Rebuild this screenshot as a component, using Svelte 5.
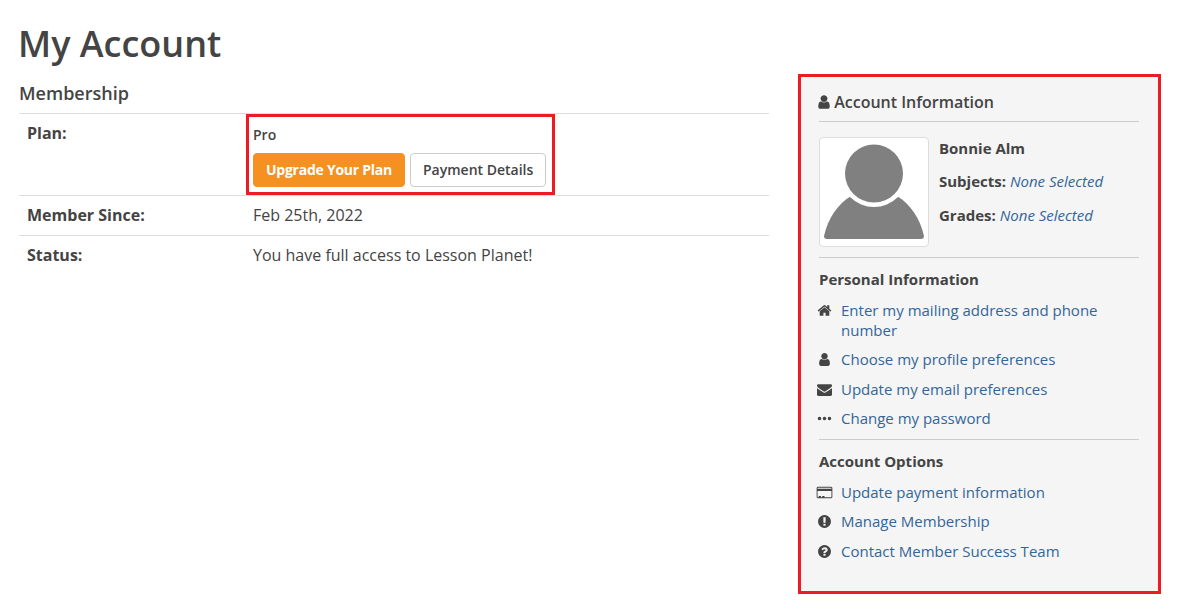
<script>
  // Font Awesome 4 style glyphs, 1792 box
  const ICONS = {
    user: 'M1536 1399q0 109-62.5 187t-150.5 78h-854q-88 0-150.5-78t-62.5-187q0-85 8.5-160.5t31.5-152 58.5-131 94-89 134.5-34.5q131 128 313 128t313-128q76 0 134.5 34.5t94 89 58.5 131 31.5 152 8.5 160.5zm-256-887q0 159-112.5 271.5t-271.5 112.5-271.5-112.5-112.5-271.5 112.5-271.5 271.5-112.5 271.5 112.5 112.5 271.5z',
    home: 'M1472 992v480q0 26-19 45t-45 19h-384v-384h-256v384h-384q-26 0-45-19t-19-45v-480q0-1 .5-3t.5-3l575-474 575 474q1 2 1 6zm223-69l-62 74q-8 9-21 11h-3q-13 0-21-7l-692-577-692 577q-12 8-24 7-13-2-21-11l-62-74q-8-10-7-23.5t11-21.5l719-599q32-26 76-26t76 26l244 204v-195q0-14 9-23t23-9h192q14 0 23 9t9 23v408l219 182q10 8 11 21.5t-7 23.5z',
    envelope: 'M1792 710v794q0 66-47 113t-113 47h-1472q-66 0-113-47t-47-113v-794q44 49 101 87 362 246 497 345 57 42 92.5 65.5t94.5 48 110 24.5h2q51 0 110-24.5t94.5-48 92.5-65.5q170-123 498-345 57-39 100-87zm0-294q0 79-49 151t-122 123q-376 261-468 325-10 7-42.5 30.5t-54 38-52 32.5-57.5 27-50 9h-2q-23 0-50-9t-57.5-27-52-32.5-54-38-42.5-30.5q-91-64-262-182.5t-205-142.5q-62-42-117-115.5t-55-136.5q0-78 41.5-130t118.5-52h1472q65 0 112.5 47t47.5 113z',
    dots: 'M515 896a215 215 0 1 1-430 0 215 215 0 1 1 430 0zm596 0a215 215 0 1 1-430 0 215 215 0 1 1 430 0zm596 0a215 215 0 1 1-430 0 215 215 0 1 1 430 0z',
    card: 'M160 256h1472q66 0 113 47t47 113v960q0 66-47 113t-113 47h-1472q-66 0-113-47t-47-113v-960q0-66 47-113t113-47zm-32 224h1536v-64q0-13-9.5-22.5t-22.5-9.5h-1472q-13 0-22.5 9.5t-9.5 22.5zm0 256v640q0 13 9.5 22.5t22.5 9.5h1472q13 0 22.5-9.5t9.5-22.5v-640zm128 544h256v128h-256zm384 0h256v128h-256z',
    exclamation: 'M896 128q209 0 385.5 103t279.5 279.5 103 385.5-103 385.5-279.5 279.5-385.5 103-385.5-103-279.5-279.5-103-385.5 103-385.5 279.5-279.5 385.5-103zm128 1247v-190q0-14-9-23.5t-22-9.5h-192q-13 0-23 10t-10 23v190q0 13 10 23t23 10h192q13 0 22-9.5t9-23.5zm-2-344l18-621q0-12-10-18-10-8-24-8h-220q-14 0-24 8-10 6-10 18l17 621q0 10 10 17.5t24 7.5h185q14 0 23.5-7.5t10.5-17.5z',
    question: 'M1024 1376v-192q0-14-9-23t-23-9h-192q-14 0-23 9t-9 23v192q0 14 9 23t23 9h192q14 0 23-9t9-23zm256-672q0-88-55.5-163t-138.5-116-170-41q-243 0-371 213-15 24 8 42l132 100q7 6 19 6 16 0 25-12 53-68 86-92 34-24 86-24 48 0 85.5 26t37.5 59q0 38-20 61t-68 45q-63 28-115.5 86.5t-52.5 125.5v36q0 14 9 23t23 9h192q14 0 23-9t9-23q0-19 21.5-49.5t54.5-49.5q32-18 49-28.5t46-35 44.5-48 28-60.5 12.5-81zm384 192q0 209-103 385.5t-279.5 279.5-385.5 103-385.5-103-279.5-279.5-103-385.5 103-385.5 279.5-279.5 385.5-103 385.5 103 279.5 279.5 103 385.5z'
  };

  const personal = [
    { icon: 'home', label: 'Enter my mailing address and phone number' },
    { icon: 'user', label: 'Choose my profile preferences' },
    { icon: 'envelope', label: 'Update my email preferences' },
    { icon: 'dots', label: 'Change my password' }
  ];
  const options = [
    { icon: 'card', label: 'Update payment information' },
    { icon: 'exclamation', label: 'Manage Membership' },
    { icon: 'question', label: 'Contact Member Success Team' }
  ];
</script>

{#snippet linkList(items)}
  <ul class="links">
    {#each items as item}
      <li>
        <svg class="ico ico-{item.icon}" viewBox="0 0 1792 1792" aria-hidden="true"><path d={ICONS[item.icon]} /></svg>
        <a href="#top">{item.label}</a>
      </li>
    {/each}
  </ul>
{/snippet}

<div class="page">
  <main class="main">
    <h1>My Account</h1>
    <h2>Membership</h2>
    <div class="rows">
      <div class="row plan">
        <div class="key">Plan:</div>
        <div class="val highlight">
          <div class="plan-name">Pro</div>
          <div class="buttons">
            <button class="btn primary">Upgrade Your Plan</button>
            <button class="btn">Payment Details</button>
          </div>
        </div>
      </div>
      <div class="row">
        <div class="key">Member Since:</div>
        <div class="val">Feb 25th, 2022</div>
      </div>
      <div class="row">
        <div class="key">Status:</div>
        <div class="val">You have full access to Lesson Planet!</div>
      </div>
    </div>
  </main>

  <aside class="side">
    <h3 class="side-title">
      <svg class="title-ico" viewBox="0 0 1792 1792" aria-hidden="true"><path d={ICONS.user} /></svg>
      Account Information
    </h3>
    <div class="profile">
      <div class="avatar">
        <svg viewBox="0 0 108 108" aria-hidden="true">
          <path d="M4 98 C8 80 18 66 31 58 L77 58 C90 66 100 80 104 98 Q104 101 101 101 H7 Q4 101 4 98 Z" fill="#808080" />
          <circle cx="54" cy="35.5" r="33.5" fill="#fff" />
          <circle cx="54" cy="35.5" r="29" fill="#808080" />
        </svg>
      </div>
      <div class="who">
        <div class="name">Bonnie Alm</div>
        <div><b>Subjects:</b> <em>None Selected</em></div>
        <div><b>Grades:</b> <em>None Selected</em></div>
      </div>
    </div>
    <section class="block">
      <h4>Personal Information</h4>
      {@render linkList(personal)}
    </section>
    <section class="block">
      <h4>Account Options</h4>
      {@render linkList(options)}
    </section>
  </aside>
</div>

<style>
  :global(body) {
    background: #fff;
    color: #444;
    font-family: "Open Sans", sans-serif;
    font-size: 16px;
    margin: 0;
  }
  .page {
    align-items: flex-start;
    display: flex;
    gap: 29px;
    padding: 0 16px 0 19px;
  }
  .main {
    flex: none;
    width: 750px;
  }
  h1 {
    font-size: 36px;
    font-weight: 600;
    line-height: 44px;
    margin: 0 0 0 -1px;
    padding-top: 22px;
  }
  h2 {
    font-size: 18px;
    font-weight: 600;
    line-height: 24px;
    margin: 15px 0 8px;
  }
  .row {
    border-top: 1px solid #ddd;
    display: flex;
    line-height: 23px;
    padding: 8px;
  }
  .key {
    font-weight: 700;
    width: 226px;
  }
  .plan {
    padding-bottom: 0;
    padding-top: 0;
  }
  .key,
  .val {
    flex: none;
  }
  .plan .key {
    padding-top: 8px;
  }
  .highlight {
    margin-left: -7px;
    outline: 3px solid #ed1c24;
    outline-offset: -3px;
    padding: 11px 9px 8px 7px;
  }
  .plan-name {
    font-size: 14px;
    font-weight: 600;
    line-height: 20px;
    margin-bottom: 8px;
  }
  .buttons {
    display: flex;
    gap: 5px;
  }
  .btn {
    background: #fff;
    border: 1px solid #ccc;
    border-radius: 4px;
    color: #444;
    font-family: inherit;
    font-size: 14px;
    font-weight: 600;
    height: 34px;
    padding: 0 12px 2px;
  }
  .btn.primary {
    background: #f49120;
    border-color: #f49120;
    color: #fff;
    font-weight: 700;
    letter-spacing: -0.25px;
  }
  .side {
    background: #f5f5f5;
    border: 3px solid #ed1c24;
    box-sizing: border-box;
    flex: none;
    height: 520px;
    margin-top: 74px;
    padding: 14px 19px 0 18px;
    width: 363px;
  }
  .side-title {
    border-bottom: 1px solid #ccc;
    font-size: 16px;
    font-weight: 600;
    line-height: 22px;
    margin: 0 0 15px;
    padding-bottom: 8px;
  }
  .title-ico {
    fill: #444;
    height: 16px;
    margin: 0 -2px 0 -3px;
    vertical-align: -2px;
    width: 16px;
  }
  .profile {
    border-bottom: 1px solid #ccc;
    display: flex;
    gap: 10px;
    padding-bottom: 10px;
  }
  .avatar {
    background: #fff;
    border: 1px solid #ddd;
    border-radius: 4px;
    box-sizing: border-box;
    flex: none;
    height: 110px;
    width: 110px;
  }
  .avatar svg {
    display: block;
  }
  .who {
    display: flex;
    flex-direction: column;
    font-size: 15px;
    gap: 13px;
    line-height: 20.5px;
    padding-top: 0.7px;
  }
  .name,
  b {
    font-weight: 700;
  }
  em {
    color: #336699;
  }
  .block + .block {
    border-top: 1px solid #ccc;
    margin-top: 11px;
  }
  .block h4 {
    font-size: 15px;
    font-weight: 700;
    line-height: 20px;
    margin: 11px 0 0;
  }
  .links {
    display: flex;
    flex-direction: column;
    gap: 9.5px;
    list-style: none;
    margin: 10.5px 0 0;
    padding: 0;
  }
  .links li {
    display: flex;
    font-size: 15px;
    line-height: 20px;
  }
  .ico {
    fill: #444;
    flex: none;
    height: 15px;
    margin: 3px 9px 0 -2px;
    width: 15px;
  }
  .ico-card {
    transform: scale(1.08);
  }
  a {
    color: #336699;
    text-decoration: none;
  }
</style>
